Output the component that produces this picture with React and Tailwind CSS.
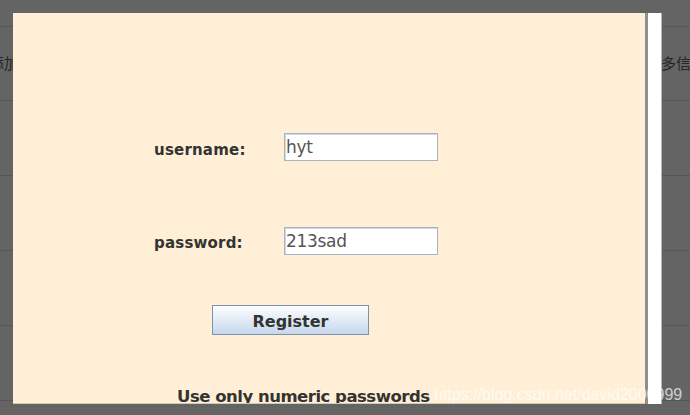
import React from "react";

export default function App() {
  const rowCls = "border-b border-[#575757] flex items-center justify-between overflow-hidden";
  return (
    <div className="relative w-[690px] h-[415px] overflow-hidden bg-[#646464] font-['DejaVu_Sans',sans-serif]">
      {/* background page rows */}
      <div className="flex flex-col">
        <div className={`h-[27px] ${rowCls}`}></div>
        <div className={`h-[74px] ${rowCls}`}>
          <span className="ml-[-11px] text-[15px] text-[#262626] font-['Noto_Sans_CJK_SC',sans-serif]">添加</span>
          <span className="mr-[-16px] text-[15px] text-[#262626] font-['Noto_Sans_CJK_SC',sans-serif] whitespace-nowrap">多信息</span>
        </div>
        <div className={`h-[75px] ${rowCls}`}></div>
        <div className={`h-[75px] ${rowCls}`}></div>
        <div className={`h-[75px] ${rowCls}`}></div>
        <div className={`h-[75px] ${rowCls}`}></div>
      </div>

      {/* dialog window */}
      <div className="absolute left-[13px] top-[13px] w-[650px] h-[391px] flex overflow-hidden">
        <div className="w-[632px] h-full bg-[#ffefd6] border-b border-[#d6cab6] flex flex-col pt-[120px] pl-[141px] overflow-hidden">
          <div className="flex items-center h-[28px]">
            <span className="w-[130px] mt-[6px] text-[15px] font-bold text-[#333] tracking-[0.2px]">username:</span>
            <div className="w-[154px] h-[28px] bg-white border border-[#a6b4c6] shadow-[inset_1px_1px_0_#d0d7e0] flex items-center pl-[1px] pt-[2px] text-[17px] text-[#555] tracking-[-0.3px]">hyt</div>
          </div>
          <div className="flex items-center h-[28px] mt-[66px]">
            <span className="w-[130px] mt-[4px] text-[15px] font-bold text-[#333] tracking-[0.2px]">password:</span>
            <div className="w-[154px] h-[28px] bg-white border border-[#a6b4c6] shadow-[inset_1px_1px_0_#d0d7e0] flex items-center pl-[1px] pt-[2px] text-[17px] text-[#555] tracking-[-0.3px]">213sad</div>
          </div>
          <div className="mt-[50px] ml-[58px] w-[157px] h-[31px] border border-[#7f92aa] bg-gradient-to-b from-[#fdfeff] to-[#c6d7ec] flex items-center justify-center pt-[4px] text-[16px] font-bold text-[#333]">
            Register
          </div>
          <div className="mt-[54px] ml-[23px] text-[16.5px] font-bold text-[#333] whitespace-nowrap leading-none tracking-[-0.5px]">
            Use only numeric passwords
          </div>
        </div>
        <div className="w-[3px] h-full bg-[#8f8f8f]"></div>
        <div className="w-[14px] h-full bg-white border-r border-[#b5b5b5]"></div>
      </div>

      {/* watermark */}
      <div className="absolute left-[434px] top-[387px] text-[16px] text-white/70 font-['Liberation_Sans',sans-serif] whitespace-nowrap leading-none">
        https://blog.csdn.net/david2000999
      </div>
    </div>
  );
}
